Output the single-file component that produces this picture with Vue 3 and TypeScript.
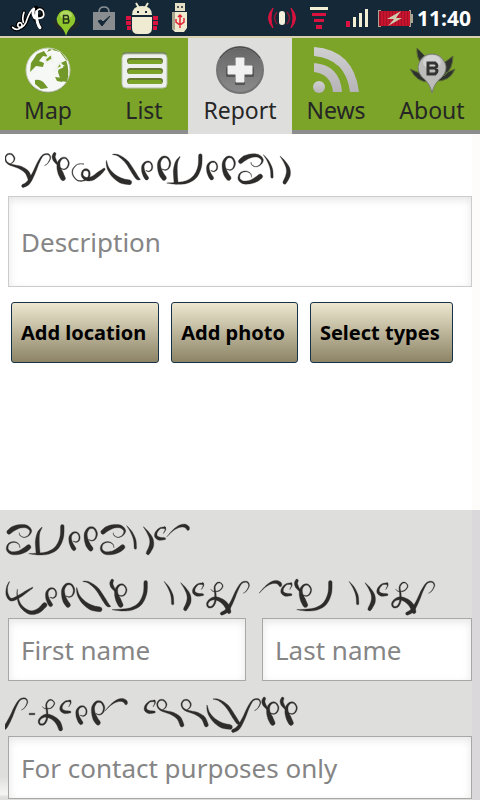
<script setup lang="ts">
import { ref } from 'vue'

type PenPoint = [number, number, number]
type Mark = [string, number, number]

// Ornamental marks: each is a set of pen strokes given as x, y and nib width.
const marks: Record<string, PenPoint[][]> = {
  hook: [[[16, 31, 1], [25, 24, 2], [28, 13, 3], [20, 2, 3], [8, 2, 3], [1, 12, 3], [4, 24, 3], [14, 32, 4], [30, 37, 5], [48, 43, 8], [66, 56, 10], [75, 76, 10]]],
  slash: [[[4, 98, 8], [20, 88, 9], [36, 60, 7], [50, 28, 5], [64, 6, 3], [80, 3, 3], [86, 14, 2], [78, 30, 1], [68, 37, 0]]],
  crest: [
    [[6, 3, 7], [3, 12, 8], [6, 22, 8], [14, 34, 4]],
    [[22, 46, 1], [34, 50, 2], [44, 44, 3], [48, 30, 3], [40, 17, 3], [28, 17, 4], [19, 28, 6], [18, 44, 9], [24, 62, 13], [31, 77, 12]],
  ],
  tall: [[[14, 39, 1], [24, 42, 2], [34, 36, 3], [38, 20, 4], [30, 5, 4], [16, 4, 5], [6, 18, 7], [6, 36, 9], [12, 54, 12], [20, 66, 12]]],
  small: [[[13, 30, 1], [22, 32, 2], [30, 26, 3], [31, 14, 3], [24, 4, 3], [12, 5, 4], [4, 16, 6], [5, 32, 8], [11, 46, 10], [15, 52, 10]]],
  spiral: [[[36, 3, 1], [18, 4, 1], [4, 18, 2], [3, 34, 2], [14, 50, 2], [28, 54, 2], [42, 50, 3], [52, 40, 4], [52, 26, 4], [44, 20, 5], [34, 24, 4], [32, 38, 5], [44, 48, 8], [62, 46, 10], [82, 32, 10], [98, 18, 5]]],
  cross: [
    [[1, 20, 1], [6, 42, 5], [22, 64, 9], [46, 80, 13], [70, 85, 12]],
    [[20, 1, 1], [38, 5, 4], [62, 24, 8], [82, 54, 9], [94, 72, 8], [102, 76, 2]],
  ],
  stem: [[[40, 8, 1], [30, 24, 6], [26, 50, 10], [28, 84, 10]]],
  bowl: [[[0, 87, 0], [30, 88, 5], [60, 84, 7], [85, 68, 9], [99, 38, 9], [101, 5, 9]]],
  whirl: [
    [[7, 22, 11], [20, 12, 12], [40, 5, 9], [60, 6, 7], [72, 18, 5], [66, 32, 2], [52, 38, 1], [40, 32, 1], [38, 24, 0]],
    [[40, 70, 0], [36, 58, 1], [22, 52, 2], [6, 58, 3], [2, 74, 5], [14, 85, 7], [36, 84, 9], [54, 76, 12], [66, 67, 12]],
  ],
  thin: [[[0, 1, 0], [14, 20, 4], [24, 44, 6], [26, 68, 6]]],
  wide: [[[0, 0, 0], [14, 18, 5], [24, 38, 9], [24, 58, 11], [14, 79, 9]]],
  curl: [
    [[28, 2, 4], [14, 4, 3], [3, 16, 5], [2, 28, 7], [12, 35, 8], [28, 35, 5]],
    [[28, 1, 4], [30, 8, 2], [24, 20, 0]],
  ],
  ramp: [[[0, 37, 0], [18, 18, 2], [36, 6, 5], [52, 3, 8], [62, 8, 9], [64, 13, 7]]],
  knot: [[[12, 20, 0], [20, 27, 1], [38, 25, 2], [48, 12, 2], [42, 2, 2], [32, 2, 3], [24, 14, 3], [26, 34, 4], [26, 56, 4], [18, 72, 4], [6, 74, 4], [2, 64, 4], [10, 53, 5], [26, 48, 8], [46, 56, 10], [60, 70, 12], [67, 88, 10]]],
  anchor: [
    [[10, 2, 1], [3, 20, 3], [4, 42, 6], [16, 56, 7], [40, 46, 7], [64, 30, 5], [80, 20, 2]],
    [[34, 24, 0], [34, 44, 2], [44, 74, 6], [70, 94, 9], [96, 90, 11], [116, 72, 12]],
  ],
  bar: [[[2, 2, 4], [16, 2, 4]]],
}

const banners: Record<string, Mark[]> = {
  report: [
    ['hook', 15, 26], ['slash', 65, 25], ['crest', 158, 23], ['spiral', 215, 54], ['cross', 318, 27],
    ['small', 425, 47], ['tall', 472, 33], ['stem', 500, 27], ['bowl', 500, 27], ['small', 620, 47],
    ['tall', 666, 33], ['whirl', 715, 27], ['thin', 790, 28], ['wide', 840, 33],
  ],
  contact: [
    ['whirl', 20, 20], ['stem', 86, 20], ['bowl', 86, 20], ['small', 207, 40], ['tall', 252, 26],
    ['whirl', 302, 20], ['thin', 380, 22], ['wide', 430, 26], ['curl', 466, 27], ['ramp', 500, 20],
  ],
  names: [
    ['anchor', 18, 18], ['small', 137, 37], ['tall', 184, 24], ['cross', 229, 18], ['crest', 331, 13],
    ['bowl', 336, 17], ['thin', 492, 18], ['wide', 542, 23], ['curl', 580, 24], ['knot', 620, 22],
    ['slash', 661, 18], ['ramp', 777, 18], ['curl', 845, 24], ['crest', 885, 13], ['bowl', 890, 17],
    ['thin', 1047, 18], ['wide', 1095, 23], ['curl', 1133, 24], ['knot', 1175, 22], ['slash', 1217, 18],
  ],
  email: [
    ['slash', -4, 14], ['bar', 87, 61], ['knot', 115, 20], ['curl', 182, 22], ['small', 228, 37],
    ['tall', 274, 23], ['ramp', 314, 18], ['curl', 435, 22], ['hook', 471, 20], ['hook', 544, 20],
    ['cross', 620, 17], ['slash', 695, 16], ['crest', 787, 13], ['crest', 842, 13],
  ],
}

// Smooths the pen points and returns the outline of the tapered stroke.
function ink(points: PenPoint[], dx: number, dy: number): string {
  const line: PenPoint[] = []
  const steps = 8
  for (let i = 0; i < points.length - 1; i++) {
    const a = points[Math.max(0, i - 1)]
    const b = points[i]
    const c = points[i + 1]
    const d = points[Math.min(points.length - 1, i + 2)]
    for (let s = 0; s < steps; s++) {
      const t = s / steps
      const at = (k: 0 | 1) =>
        0.5 * (2 * b[k] + (c[k] - a[k]) * t + (2 * a[k] - 5 * b[k] + 4 * c[k] - d[k]) * t * t + (3 * b[k] - a[k] - 3 * c[k] + d[k]) * t * t * t)
      line.push([at(0) + dx, at(1) + dy, b[2] + (c[2] - b[2]) * t])
    }
  }
  const end = points[points.length - 1]
  line.push([end[0] + dx, end[1] + dy, end[2]])
  const left: string[] = []
  const right: string[] = []
  line.forEach((p, i) => {
    const before = line[Math.max(0, i - 1)]
    const after = line[Math.min(line.length - 1, i + 1)]
    const len = Math.hypot(after[0] - before[0], after[1] - before[1]) || 1
    const half = p[2] * 0.6
    const nx = (-(after[1] - before[1]) / len) * half
    const ny = ((after[0] - before[0]) / len) * half
    left.push(`${(p[0] + nx).toFixed(1)} ${(p[1] + ny).toFixed(1)}`)
    right.unshift(`${(p[0] - nx).toFixed(1)} ${(p[1] - ny).toFixed(1)}`)
  })
  const first = (line[0][2] * 0.6).toFixed(1)
  const last = (end[2] * 0.6).toFixed(1)
  return `M${left.join('L')}A${last} ${last} 0 0 0 ${right.join('L')}A${first} ${first} 0 0 0 ${left[0]}Z`
}

function banner(name: string): string[] {
  return banners[name].flatMap(([mark, x, y]) => marks[mark].map((stroke) => ink(stroke, x, y)))
}

const tabs = ['Map', 'List', 'Report', 'News', 'About']
const active = ref('Report')
const description = ref('')
const firstName = ref('')
const lastName = ref('')
const email = ref('')
</script>

<template>
  <div class="app">
    <header class="status">
      <div class="tray">
        <svg class="i-script" width="36" height="30" viewBox="0 0 108 90" fill="none" stroke-linecap="round">
          <g stroke="#000" stroke-width="12"><path d="M8 73Q16 82 26 78Q42 68 33 60Q24 56 23 68Q34 84 48 58Q56 32 70 20L78 14M42 28Q36 46 40 58M74 24Q70 40 76 50M84 40Q104 44 97 22Q88 12 80 26Q78 50 86 68L92 74" /></g>
          <g stroke="#fff" stroke-width="5"><path d="M8 73Q16 82 26 78Q42 68 33 60Q24 56 23 68Q34 84 48 58Q56 32 66 20" /><path d="M42 28Q36 46 40 58" /><path d="M84 46Q108 46 99 24Q88 12 80 26" /><path d="M71 18Q66 32 74 44M80 26Q78 50 86 68L90 74" stroke-width="9" /></g>
        </svg>
        <svg class="i-pin" width="30" height="30" viewBox="0 0 30 30">
          <path d="M7 3l7 8-5 8zM25 5l-4 13-6-3zM1 14l10 4 3 8q-9 0-13-12zM29 15q-2 9-12 10l3-7z" fill="#22272a" />
          <path d="M15 30Q13 23 8 19Q4 14 7 9Q10 4 15 4T23 9Q26 14 22 19Q17 23 15 30Z" fill="#8fc62c" />
          <ellipse cx="15" cy="9" rx="6" ry="4" fill="#c7e884" opacity=".6" />
          <path d="M12.500 9.500h4q2 2 0 3.500h-4zM12.500 13h4.500q2 2 0 4h-4.500z" fill="none" stroke="#24301a" stroke-width="1.500" />
        </svg>
        <svg class="i-bag" width="22" height="24" viewBox="0 0 22 24">
          <path d="M6 6Q6 1 11 1T16 6" fill="none" stroke="#8b9196" stroke-width="1.500" />
          <path d="M0 6h22v18H0z" fill="#898d90" />
          <path d="M5 15l4 5 8-10-7 6-2-2z" fill="#142837" stroke="#142837" />
        </svg>
        <svg class="i-robot" width="34" height="32" viewBox="0 0 34 32">
          <path d="M1 14h5v4H1zM1 19h5v4H1zM2 24h4v4H2zM28 14h5v4h-5zM28 19h5v4h-5zM28 24h4v4h-4z" fill="#d9123f" />
          <path d="M11 1l3 5M23 1l-3 5" stroke="#eeebd2" stroke-width="2" />
          <path d="M7 13Q7 4 17 4T27 13zM7 15h20v11q0 6-6 6h-8q-6 0-6-6z" fill="#eeebd2" />
          <path d="M12 9h2v2h-2zM20 9h2v2h-2z" fill="#142837" />
        </svg>
        <svg class="i-usb" width="17" height="30" viewBox="0 0 17 30">
          <path d="M4 0h10v8H4z" fill="#e5dfc7" /><path d="M6 3h2v2H6zM10 3h2v2h-2z" fill="#555" />
          <path d="M1 9h15v16l-3 4H4l-3-3z" fill="#efe9d0" /><path d="M1 9h3v18l-3-1z" fill="#aaa58e" />
          <path d="M9 12v13M5 16v3l4 3 4-3v-4M7 14l2-2 2 2" fill="none" stroke="#e32636" stroke-width="1.500" />
        </svg>
      </div>
      <div class="tray">
        <svg width="30" height="24" viewBox="0 0 30 24" fill="none">
          <path d="M6 2Q-3 12 6 22Q2 12 6 2ZM24 2Q33 12 24 22Q28 12 24 2Z" fill="#d9123f" stroke="#d9123f" />
          <path d="M10 6Q5 12 10 18M20 6Q25 12 20 18" stroke="#8c1734" stroke-width="1.500" />
          <rect x="12" y="5" width="6" height="14" rx="3" fill="#f3f0dc" />
        </svg>
        <svg class="i-wifi" width="18" height="22" viewBox="0 0 18 22">
          <path d="M0 0h18v3H0z" fill="#f3efd5" /><path d="M2 6h14v3H2zM4 12h10v3H4zM6 18h6v4H6z" fill="#d9123f" />
        </svg>
        <svg class="i-signal" width="22" height="18" viewBox="0 0 22 18">
          <path d="M0 12h4v6H0z" fill="#d9123f" /><path d="M7 8h3v10H7zM13 4h3v14h-3zM19 0h3v18h-3z" fill="#f3efd5" />
        </svg>
        <svg class="i-battery" width="35" height="17" viewBox="0 0 35 17">
          <path d="M0 0h3v17H0zM31 0h2v4h2v9h-2v4h-2z" fill="#a9a592" />
          <path d="M1 1h31v15H1z" fill="#a80f28" />
          <path d="M4 1v15M7 1v15M10 1v15M13 1v15M16 1v15M19 1v15M22 1v15M25 1v15M28 1v15M31 1v15" stroke="#e51a32" />
          <path d="M23 1L9 9h7l-6 7 14-8h-6z" fill="#cfc9ae" />
        </svg>
        <time class="clock">11:40</time>
      </div>
    </header>

    <nav class="tabs">
      <button v-for="tab in tabs" :key="tab" type="button" class="tab" :class="{ active: tab === active }" @click="active = tab">
        <svg v-if="tab === 'Map'" width="48" height="48" viewBox="0 0 48 48">
          <circle cx="24" cy="25" r="22" fill="#6f853f" />
          <circle cx="24" cy="24" r="22" fill="#f6f8f5" stroke="#c3cab8" />
          <path d="M23 6l7-3 8 4 5 7-4 2-3 1 5 3-6 1-1 5 3 9 6 1Q46 25 42 14L36 6 25 3zM20 5l-7 3-6 9-1 9 6-6 7 1 1-4-5-2 4-5 5 1zM11 34q6-1 10 4l3 4-7 1-6-5z" fill="#72982a" />
          <path d="M27 8l-6 5 1 4 5-3 2 3-1-7zM36 16l-5 8 7-3z" fill="#7ba428" stroke="#f1f4ee" stroke-width="2" />
          <path d="M31 31l8 1 3-2-4 6-5-1z" fill="#72982a" />
        </svg>
        <svg v-else-if="tab === 'List'" width="48" height="48" viewBox="0 0 48 48">
          <rect x="2" y="6" width="45" height="36" rx="4" fill="#73855a" />
          <rect x="2" y="8" width="45" height="34" rx="4" fill="#eef0ed" stroke="#b9c0ae" />
          <path d="M10 15h30M10 25h30M10 35h30" stroke="#65782f" stroke-width="6" stroke-linecap="round" />
          <path d="M10 16h30M10 26h30M10 36h30" stroke="#7ba428" stroke-width="4" stroke-linecap="round" />
        </svg>
        <svg v-else-if="tab === 'Report'" width="48" height="48" viewBox="0 0 48 48">
          <defs><linearGradient id="disc" x2="0" y2="1"><stop stop-color="#666" /><stop offset="1" stop-color="#8b8b8b" /></linearGradient></defs>
          <circle cx="24" cy="24" r="23" fill="url(#disc)" stroke="#747474" stroke-width="2" />
          <path d="M4 12Q12 1 24 1T44 12" fill="none" stroke="#444" />
          <path d="M20 14h8v8h9v8h-9v8h-8v-8h-9v-8h9z" fill="#555" stroke="#555" stroke-width="2" stroke-linejoin="round" />
          <path d="M20 12h8v8h8v8h-8v8h-8v-8h-8v-8h8z" fill="#f1f1f1" stroke="#f1f1f1" stroke-linejoin="round" />
        </svg>
        <svg v-else-if="tab === 'News'" width="48" height="48" viewBox="0 0 48 48">
          <defs><linearGradient id="feed" x2="0" y2="1"><stop stop-color="#d0d0d0" /><stop offset="1" stop-color="#b7b4b9" /></linearGradient></defs>
          <circle cx="7" cy="41" r="6" fill="url(#feed)" />
          <path d="M2 17Q28 19 30 46h-9Q19 28 2 26zM2 1Q42 4 47 46h-9Q34 13 2 10z" fill="url(#feed)" />
        </svg>
        <svg v-else width="48" height="48" viewBox="0 0 48 48">
          <path d="M9 2l9 9-4 8q-6-8-5-17zM45 10q0 13-9 20l-3-11zM2 23l12 5 8 8Q9 37 2 23zM47 23q-5 13-20 12l8-7z" fill="#2f332e" stroke="#5a6b35" />
          <path d="M24 47Q22 37 14 31Q8 24 11 17Q15 8 24 8T37 17Q40 24 34 31Q26 37 24 47Z" fill="#bcbdbb" stroke="#777c72" />
          <ellipse cx="24" cy="16" rx="9" ry="7" fill="#e1e1e1" opacity=".6" />
          <path d="M20 17h7q4 3 0 5h-7zM20 22h7q4 3 0 6h-7z" fill="none" stroke="#343434" stroke-width="3" />
        </svg>
        <span>{{ tab }}</span>
      </button>
    </nav>

    <main>
      <section class="report">
        <svg class="banner" width="480" height="51" viewBox="0 0 1440 153" aria-hidden="true">
          <path v-for="(d, i) in banner('report')" :key="i" :d="d" />
        </svg>
        <textarea v-model="description" class="field description" rows="1" placeholder="Description" aria-label="Description"></textarea>
        <div class="actions">
          <button type="button">Add location</button>
          <button type="button">Add photo</button>
          <button type="button">Select types</button>
        </div>
      </section>

      <section class="contact">
        <svg class="banner" width="480" height="50" viewBox="0 0 1440 150" aria-hidden="true">
          <path v-for="(d, i) in banner('contact')" :key="i" :d="d" />
        </svg>
        <svg class="banner names" width="480" height="43" viewBox="0 0 1440 129" aria-hidden="true">
          <path v-for="(d, i) in banner('names')" :key="i" :d="d" />
        </svg>
        <div class="pair">
          <input v-model="firstName" class="field" type="text" placeholder="First name" aria-label="First name" />
          <input v-model="lastName" class="field" type="text" placeholder="Last name" aria-label="Last name" />
        </div>
        <svg class="banner" width="480" height="43" viewBox="0 0 1440 129" aria-hidden="true">
          <path v-for="(d, i) in banner('email')" :key="i" :d="d" />
        </svg>
        <input v-model="email" class="field" type="email" placeholder="For contact purposes only" aria-label="For contact purposes only" />
      </section>
    </main>
  </div>
</template>

<style>
body {
  background: #fff;
}
</style>

<style scoped>
.app {
  display: flex;
  flex-direction: column;
  min-height: 100vh;
  overflow: hidden;
  font-family: "Noto Sans", "Open Sans", sans-serif;
  color: #262626;
}
.app * {
  box-sizing: border-box;
}
svg {
  display: block;
  flex: none;
}
.status {
  display: flex;
  justify-content: space-between;
  height: 38px;
  padding: 0 9px 0 10px;
  background: #142837;
  border-bottom: 2px solid #d9d2b0;
}
.tray {
  display: flex;
  align-items: center;
  gap: 8px;
}
.i-pin {
  margin: 6px 4px 0 -3px;
}
.i-bag {
  margin-right: 2px;
}
.i-usb {
  margin-left: 4px;
}
.i-wifi {
  margin-left: 5px;
}
.i-signal {
  margin-left: 10px;
}
.i-battery {
  margin-left: 2px;
}
.clock {
  margin-left: -4px;
  font: 700 21px/38px "Open Sans", sans-serif;
  color: #fff;
}
.tabs {
  display: grid;
  grid-template-columns: repeat(5, 1fr);
  background: #7ba428;
  height: 96px;
}
.tab {
  display: flex;
  flex-direction: column;
  align-items: center;
  padding: 8px 0 0;
  border: 0;
  border-bottom: 4px solid #8d8d8d;
  background: none;
  color: #262626;
  font: 400 23px/32px "Noto Sans", "Open Sans", sans-serif;
}
.tab.active {
  z-index: 1;
  margin: 0 -4px;
  background: #dededd;
  border-bottom-color: #dededd;
}
main {
  flex: 1;
  display: flex;
  flex-direction: column;
}
.banner {
  fill: #2d2c2a;
  stroke: #2d2c2a;
  stroke-width: 1;
  clip-path: inset(0 0 0 5px);
}
.report {
  min-height: 376px;
  padding: 11px 0 8px;
  border-right: 8px solid #fdfcfb;
}
.report .banner,
.contact .banner {
  margin-right: -8px;
}
.field {
  display: block;
  width: 100%;
  min-width: 0;
  height: 63px;
  margin: 0;
  padding: 0 12px;
  border: 1px solid #a8a8a6;
  border-radius: 0;
  background: #fff;
  box-shadow: inset 0 3px 8px #e6e6e6;
  color: #262626;
  font: 400 26px/34px "Noto Sans", "Open Sans", sans-serif;
  resize: none;
}
.field::placeholder {
  color: #858585;
  opacity: 1;
}
.description {
  width: calc(100% - 8px);
  height: 91px;
  margin-left: 8px;
  padding: 28px 12px;
  border-color: #ccc;
}
.actions {
  display: flex;
  gap: 12px;
  padding: 15px 0 0 11px;
}
.actions button {
  height: 61px;
  padding: 0 12px 0 9px;
  border: 1px solid #173247;
  border-radius: 3px;
  background: linear-gradient(#ece7cf, #8d8466);
  color: #000;
  font: 700 20px/28px "Noto Sans", "Open Sans", sans-serif;
  white-space: nowrap;
}
.contact {
  flex: 1;
  padding: 8px 0 1px;
  border-right: 8px solid #dad8da;
  background: linear-gradient(#dededd 92%, #f6f6f4 98%, #dededd 99%);
}
.names {
  margin-top: 7px;
}
.pair {
  display: grid;
  grid-template-columns: 238fr 210fr;
  gap: 16px;
  padding: 0 0 12px 8px;
}
.contact > .field {
  width: calc(100% - 8px);
  margin-left: 8px;
}
</style>
